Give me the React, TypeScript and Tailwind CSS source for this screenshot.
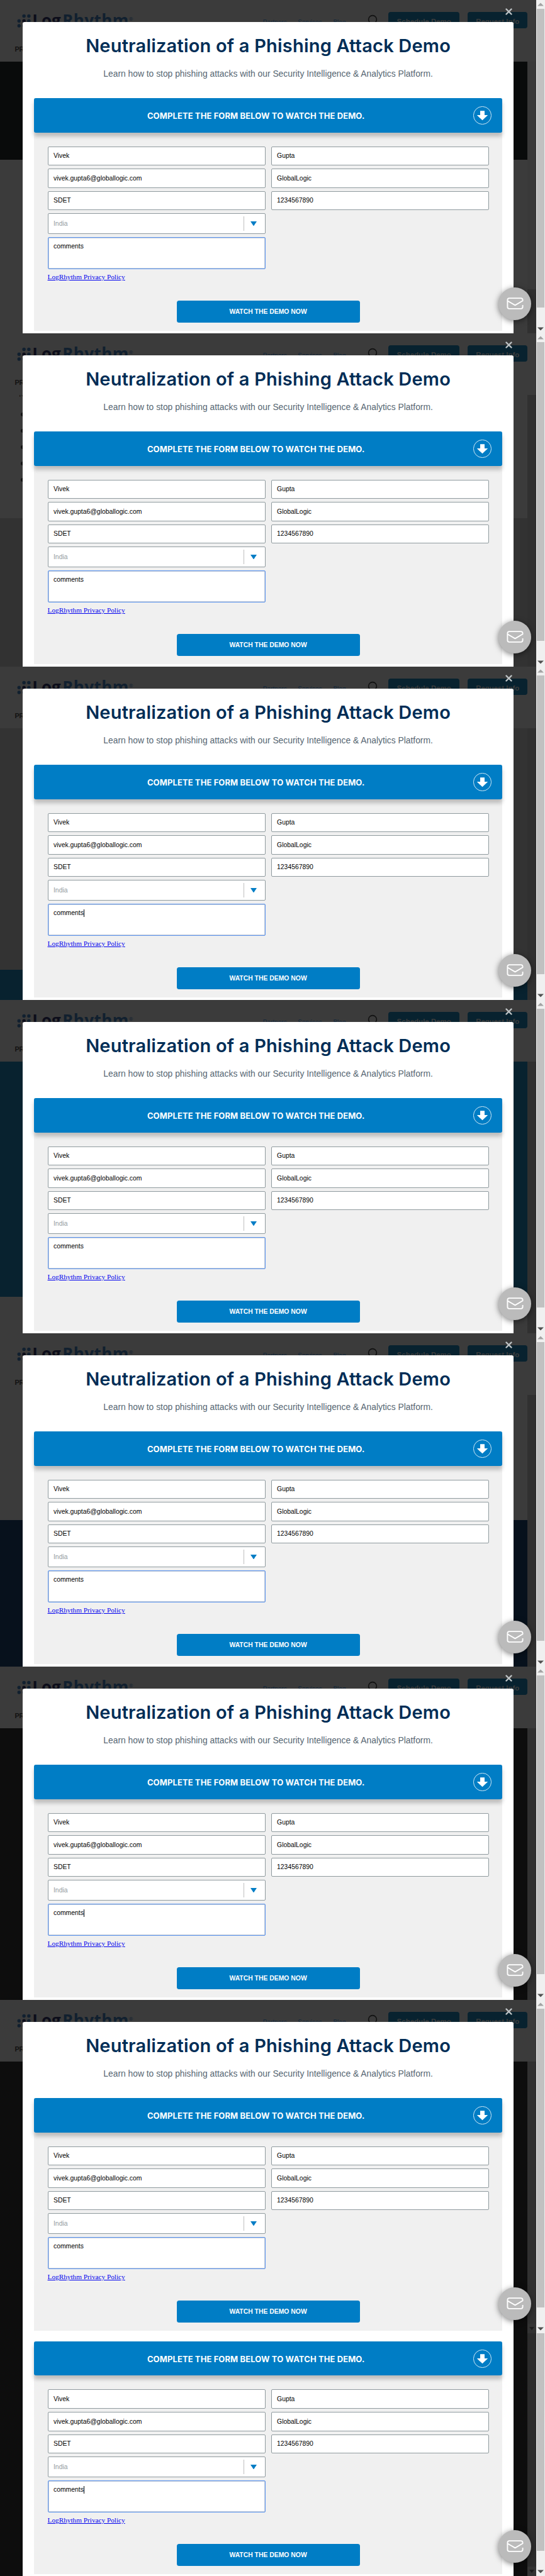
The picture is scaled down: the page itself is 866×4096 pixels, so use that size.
import React from "react";

type Band = { className: string };

type FrameProps = {
  bands: Band[];
  innerScroll?: React.ReactNode;
  caret?: boolean;
  bullets?: boolean;
};

const arial = "font-['Liberation_Sans',Arial,sans-serif]";

function Logo() {
  return (
    <div className="flex items-start">
      <svg className="mt-[22px] ml-[27px] h-[24px] w-[24px] shrink-0" viewBox="0 0 24 24">
        <g fill="#11202f">
          <circle cx="11.1" cy="3.5" r="2.7" />
          <circle cx="18.9" cy="3.5" r="2.7" />
          <circle cx="3.3" cy="11.3" r="2.7" />
          <circle cx="18.9" cy="11.3" r="2.7" />
          <circle cx="3.3" cy="19" r="2.7" />
          <circle cx="11.1" cy="19" r="2.7" />
        </g>
        <circle cx="11.1" cy="11.3" r="2.7" fill="#0c0d1a" />
      </svg>
      <div className="mt-[14.2px] ml-[0.3px] flex font-['Open_Sans',sans-serif] text-[26px] leading-[36px] font-bold text-[#11202f]">
        <span className="text-[#0c0d1a]">Log</span>
        <span className="ml-[2.5px] tracking-[0.4px]">Rhythm</span>
        <span className="mt-[9.5px] text-[8px] leading-[12px] font-normal">®</span>
      </div>
    </div>
  );
}

function SiteHeader() {
  return (
    <header className={`flex h-[98px] flex-col justify-between bg-[#3b3b3b] ${arial}`}>
      <div className="flex h-[52px] items-start justify-between">
        <Logo />
        <div className="flex items-start pr-[13.2px]">
          <nav className="mt-[29px] mr-[16.6px] flex w-[150px] text-[10px] leading-[14px] text-[#12283c]">
            <span className="w-[55.4px]">Partners</span>
            <span className="w-[56.2px]">Services</span>
            <span>Blog</span>
          </nav>
          <svg className="mt-[23px] mr-[16.7px] h-[22px] w-[16px]" viewBox="0 0 16 22">
            <circle cx="8" cy="8" r="6.4" fill="none" stroke="#111" strokeWidth="1.6" />
          </svg>
          <div className="mt-[19px] mr-[12.7px] flex h-[26px] w-[113.2px] justify-center rounded bg-[#08222f] pt-[8px] text-[11.5px] leading-[14px] font-bold text-[#3d3d3d]">
            Schedule Demo
          </div>
          <div className="mt-[19px] flex h-[26px] w-[95.4px] justify-center rounded bg-[#08222f] pt-[8px] text-[11.4px] leading-[14px] font-bold text-[#3d3d3d]">
            Request Info
          </div>
        </div>
      </div>
      <div className="mb-[14px] ml-[23.4px] text-[10.8px] leading-[12px] font-bold text-[#121212]">PR</div>
    </header>
  );
}

function Field({ value }: { value: string }) {
  return (
    <div className="flex items-center rounded-[2px] border border-[#8f9a9e] bg-white pl-[8.4px] text-[10.4px] text-black">
      {value}
    </div>
  );
}

function FormCard({ caret }: { caret?: boolean }) {
  return (
    <section className={`mx-[17.3px] h-[370.1px] bg-[#f0f0f0] ${arial}`}>
      <div className="flex h-[54.8px] items-center rounded-[3px] bg-[#007dc5] pr-[17.5px] shadow-[0_6px_6px_rgba(0,0,0,0.22)]">
        <div className="flex-1 pt-[2.5px] pl-[7.6px] text-center font-['Inter',sans-serif] text-[13px] font-bold tracking-[0.1px] whitespace-nowrap text-white">
          COMPLETE THE FORM BELOW TO WATCH THE DEMO.
        </div>
        <svg className="h-[29px] w-[29px]" viewBox="0 0 50 50">
          <circle cx="25" cy="25" r="24.3" fill="none" stroke="#fff" strokeWidth="1.4" />
          <path d="M19 12.5H31V24H40L25 38.5L10 24H19Z" fill="#fff" />
        </svg>
      </div>
      <div className="mt-[22px] grid grid-cols-[346.4px_346.4px] grid-rows-[30.6px_31px_30.6px_32.9px_51.4px] gap-x-[8.7px] gap-y-[4.8px] pl-[21.9px]">
        <Field value="Vivek" />
        <Field value="Gupta" />
        <Field value="vivek.gupta6@globallogic.com" />
        <Field value="GlobalLogic" />
        <Field value="SDET" />
        <Field value="1234567890" />
        <div className="flex items-center justify-between rounded-[2px] border border-[#8f9a9e] bg-white pr-[13px] pl-[8.4px] text-[10.4px] text-[#939ca0]">
          India
          <div className="flex items-center gap-[10px]">
            <span className="h-[23px] w-px bg-[#bfbfbf]" />
            <svg className="h-[7.5px] w-[10px]" viewBox="0 0 10 7.5">
              <path d="M0 0H10L5 7.5Z" fill="#007dc5" />
            </svg>
          </div>
        </div>
        <div />
        <div className="flex items-start rounded-[2px] border border-[#5e97f0] bg-white pt-[8px] pl-[8.4px] text-[10.4px] leading-[12px] text-black shadow-[inset_0_0_0_0.5px_#8a97b0]">
          comments
          {caret && <span className="h-[12px] w-px bg-black" />}
        </div>
      </div>
      <div className="mt-[6px] ml-[21.9px] font-['Liberation_Serif',serif] text-[11.25px] leading-[13px] text-[#0000ee] underline">
        LogRhythm Privacy Policy
      </div>
      <div className="mx-auto mt-[31px] flex h-[34.6px] w-[291px] items-center justify-center rounded-[3.5px] bg-[#007dc5] text-[10.4px] font-bold text-white">
        WATCH THE DEMO NOW
      </div>
    </section>
  );
}

function ChatButton() {
  return (
    <div className="absolute right-[7.2px] bottom-[21.3px] flex h-[52px] w-[52px] items-center justify-center rounded-full bg-[#bbbbbb] shadow-[0_2px_10px_rgba(0,0,0,0.5)]">
      <svg className="h-[19px] w-[27px]" viewBox="0 0 46 33" fill="none" stroke="#fff" strokeWidth="3.2" strokeLinejoin="round">
        <path d="M44 21V26a5 5 0 0 1-5 5H7a5 5 0 0 1-5-5V7a5 5 0 0 1 5-5H39a5 5 0 0 1 5 5V9L23 21.5L2.5 9.5" />
      </svg>
    </div>
  );
}

function ScrollBar({ top, thumb }: { top?: boolean; thumb: string }) {
  return (
    <div className="flex w-[14.4px] shrink-0 flex-col items-center bg-[#f0f0f0]">
      {top && (
        <svg className="h-[14.4px] w-[14px]" viewBox="0 0 14 14.4">
          <path d="M2 9.4H12L7 4.6Z" fill="#a3a3a3" />
        </svg>
      )}
      <div className={`w-[12.2px] bg-[#c1c1c1] ${thumb}`} />
      <svg className="mt-auto h-[14.4px] w-[14px]" viewBox="0 0 14 14.4">
        <path d="M2 4.4H12L7 9.4Z" fill="#505050" />
      </svg>
    </div>
  );
}

function InnerArrow() {
  return (
    <div className="mt-auto flex h-[15px] items-center justify-center bg-[#333333]">
      <svg className="h-[5px] w-[8px]" viewBox="0 0 8 5">
        <path d="M0 0H8L4 5Z" fill="#1b1b1b" />
      </svg>
    </div>
  );
}

function Frame({ bands, innerScroll, caret, bullets }: FrameProps) {
  return (
    <div className="flex h-[530px] overflow-hidden">
      <div className="relative w-[851.6px] shrink-0 overflow-hidden">
        <div className="flex h-full flex-col">
          <SiteHeader />
          <div className="flex flex-1 overflow-hidden">
            <div className="relative flex w-[837.6px] flex-col">
              {bands.map((b, i) => (
                <div key={i} className={b.className} />
              ))}
              {bullets && (
                <>
                  <span className={`absolute top-[-8px] left-[28px] text-[12px] leading-[14px] text-[#141414] ${arial}`}>
                    To
                  </span>
                  <ul className="absolute top-[28px] left-[33px] flex flex-col gap-[20px]">
                    {[0, 1, 2, 3, 4].map((i) => (
                      <li key={i} className="h-[6px] w-[6px] rounded-full bg-[#141414]" />
                    ))}
                  </ul>
                </>
              )}
            </div>
            <div className="flex flex-1 flex-col bg-[#303030]">{innerScroll}</div>
          </div>
        </div>
        <div className="absolute top-[34.6px] left-[36.4px] flex h-[495.4px] w-[779.4px] flex-col rounded-t-[3px] bg-white">
          <h1 className="mt-[19.5px] h-[38px] text-center font-['Inter',sans-serif] text-[29px] leading-[38px] font-semibold tracking-[0.2px] whitespace-nowrap text-[#002d56]">
            Neutralization of a Phishing Attack Demo
          </h1>
          <p className={`mt-[17.1px] mb-[30.7px] h-[16px] text-center text-[13.83px] leading-[16px] text-[#566672] ${arial}`}>
            Learn how to stop phishing attacks with our Security Intelligence &amp; Analytics Platform.
          </p>
          <FormCard caret={caret} />
        </div>
        <svg className="absolute top-[13px] right-[38px] h-[11px] w-[11px]" viewBox="0 0 11 11">
          <path d="M1.5 1.5L9.5 9.5M9.5 1.5L1.5 9.5" stroke="#bfc4c6" strokeWidth="2.4" strokeLinecap="round" />
        </svg>
        <ChatButton />
      </div>
      <ScrollBar top thumb="h-[474.5px]" />
    </div>
  );
}

function LastFrame() {
  return (
    <div className="flex h-[386px] overflow-hidden">
      <div className="relative flex w-[851.6px] shrink-0 overflow-hidden bg-[#0d0d0d]">
        <div className="ml-[36.4px] w-[779.4px] bg-white pt-[12.7px]">
          <FormCard caret />
        </div>
        <div className="ml-auto flex w-[14px] flex-col bg-[#2c2c2c]">
          <InnerArrow />
        </div>
        <ChatButton />
      </div>
      <ScrollBar thumb="h-[346px]" />
    </div>
  );
}

export default function App() {
  return (
    <main className="h-[4096px] w-[866px] overflow-hidden">
      <Frame
        bands={[{ className: "h-[156px] bg-[#090b0b]" }, { className: "flex-1 bg-[#3b3b3b]" }]}
        innerScroll={
          <>
            <div className="h-[362px] bg-[#393939]" />
            <div className="flex-1 bg-[#303030]" />
          </>
        }
      />
      <Frame bullets bands={[{ className: "h-[196px] bg-[#3b3b3b]" }, { className: "flex-1 bg-[#323232]" }]} />
      <Frame caret bands={[{ className: "h-[384px] bg-[#333333]" }, { className: "flex-1 bg-[#08222f]" }]} />
      <Frame bands={[{ className: "h-[374px] bg-[#08222f]" }, { className: "flex-1 bg-[#3b3b3b]" }]} />
      <Frame bands={[{ className: "h-[199px] bg-[#3b3b3b]" }, { className: "flex-1 bg-[#07111c]" }]} />
      <Frame caret bands={[{ className: "flex-1 bg-[#0d0d0d]" }]} />
      <Frame bands={[{ className: "flex-1 bg-[#0d0d0d]" }]} innerScroll={<InnerArrow />} />
      <LastFrame />
    </main>
  );
}
